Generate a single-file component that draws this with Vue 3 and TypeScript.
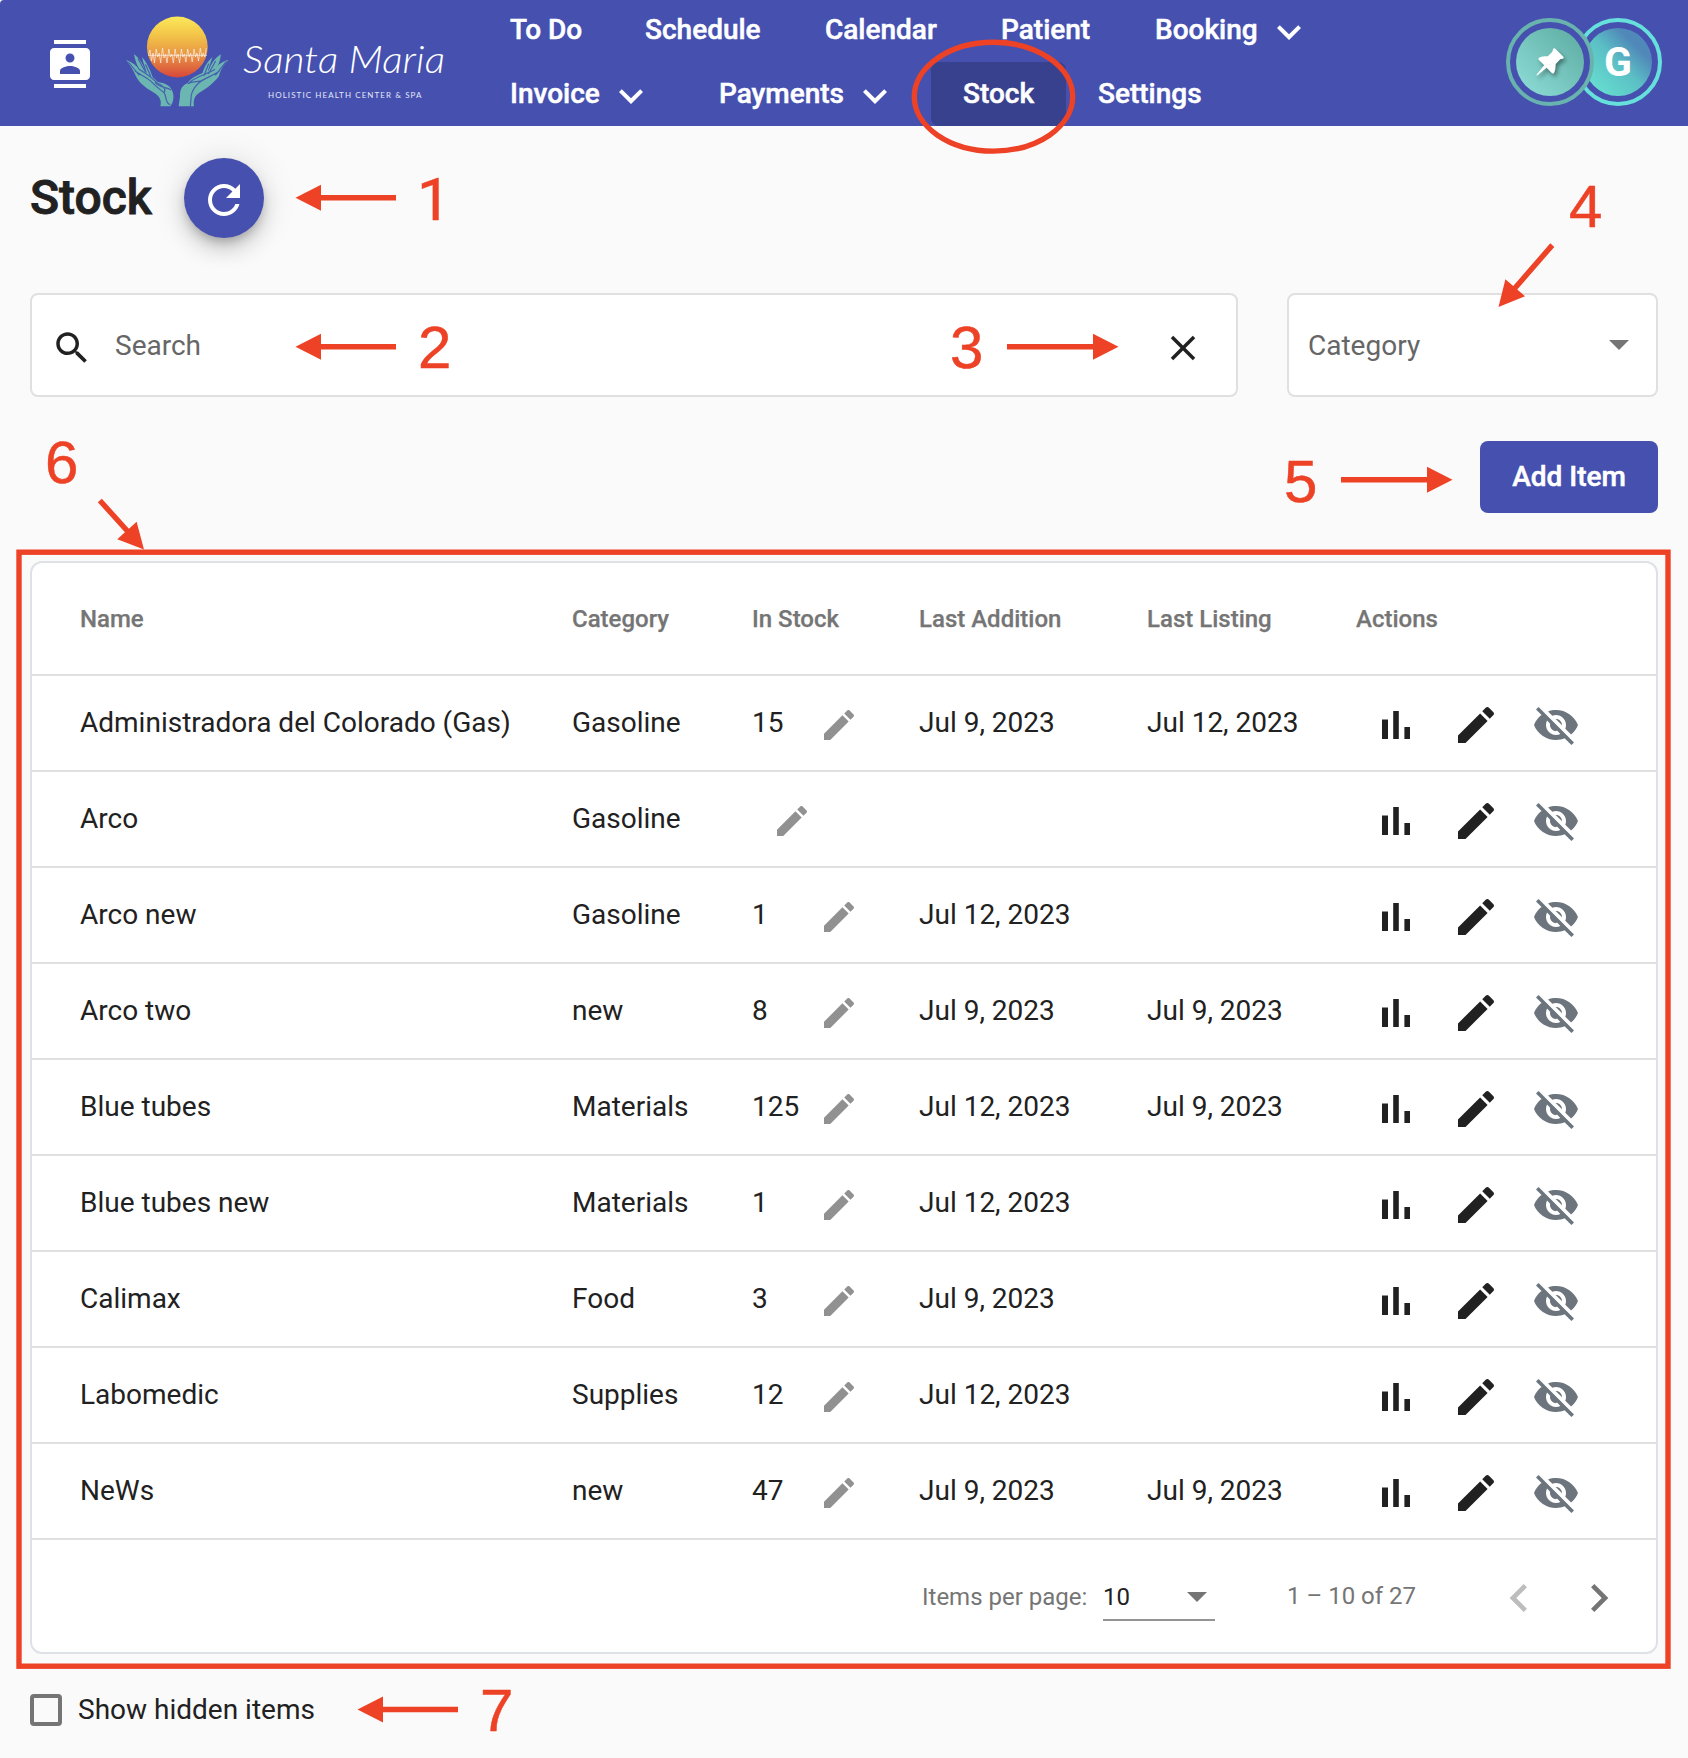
<script setup lang="ts">
interface NavLink {
  label: string
  width: number
  menu?: boolean
  active?: boolean
}
interface StockItem {
  name: string
  category: string
  stock: string
  added: string
  listed: string
}

const navRows: NavLink[][] = [
  [
    { label: 'To Do', width: 135 },
    { label: 'Schedule', width: 180 },
    { label: 'Calendar', width: 176 },
    { label: 'Patient', width: 154 },
    { label: 'Booking', width: 222, menu: true },
  ],
  [
    { label: 'Invoice', width: 209, menu: true },
    { label: 'Payments', width: 244, menu: true },
    { label: 'Stock', width: 135, active: true },
    { label: 'Settings', width: 168 },
  ],
]

const columns: string[] = ['Name', 'Category', 'In Stock', 'Last Addition', 'Last Listing', 'Actions']

const items: StockItem[] = [
  { name: 'Administradora del Colorado (Gas)', category: 'Gasoline', stock: '15', added: 'Jul 9, 2023', listed: 'Jul 12, 2023' },
  { name: 'Arco', category: 'Gasoline', stock: '', added: '', listed: '' },
  { name: 'Arco new', category: 'Gasoline', stock: '1', added: 'Jul 12, 2023', listed: '' },
  { name: 'Arco two', category: 'new', stock: '8', added: 'Jul 9, 2023', listed: 'Jul 9, 2023' },
  { name: 'Blue tubes', category: 'Materials', stock: '125', added: 'Jul 12, 2023', listed: 'Jul 9, 2023' },
  { name: 'Blue tubes new', category: 'Materials', stock: '1', added: 'Jul 12, 2023', listed: '' },
  { name: 'Calimax', category: 'Food', stock: '3', added: 'Jul 9, 2023', listed: '' },
  { name: 'Labomedic', category: 'Supplies', stock: '12', added: 'Jul 12, 2023', listed: '' },
  { name: 'NeWs', category: 'new', stock: '47', added: 'Jul 9, 2023', listed: 'Jul 9, 2023' },
]

const icons = {
  edit: 'M3 17.25V21h3.75L17.81 9.94l-3.75-3.75L3 17.25zM20.71 7.04c.39-.39.39-1.02 0-1.41l-2.34-2.34c-.39-.39-1.02-.39-1.41 0l-1.83 1.83 3.75 3.75 1.83-1.83z',
  chart: 'M5 9.2h3V19H5V9.2zM10.6 5h2.8v14h-2.8V5zm5.6 8H19v6h-2.8v-6z',
  hide: 'M12 7c2.76 0 5 2.24 5 5 0 .65-.13 1.26-.36 1.83l2.92 2.92c1.51-1.26 2.7-2.89 3.43-4.75-1.73-4.39-6-7.5-11-7.5-1.4 0-2.74.25-3.98.7l2.16 2.16C10.74 7.13 11.35 7 12 7zM2 4.27l2.28 2.28.46.46C3.08 8.3 1.78 10.02 1 12c1.73 4.39 6 7.5 11 7.5 1.55 0 3.03-.3 4.38-.84l.42.42L19.73 22 21 20.73 3.27 3 2 4.27zM7.53 9.8l1.55 1.55c-.05.21-.08.43-.08.65 0 1.66 1.34 3 3 3 .22 0 .44-.03.65-.08l1.55 1.55c-.67.33-1.41.53-2.2.53-2.76 0-5-2.24-5-5 0-.79.2-1.53.53-2.2zm4.31-.78l3.15 3.15.02-.16c0-1.66-1.34-3-3-3l-.17.01z',
}
</script>

<template>
  <div class="page">
    <header class="topbar">
      <svg class="contacts" viewBox="0 0 24 24"><path d="M20 0H4v2h16V0zM4 24h16v-2H4v2zM20 4H4c-1.1 0-2 .9-2 2v12c0 1.1.9 2 2 2h16c1.1 0 2-.9 2-2V6c0-1.1-.9-2-2-2zm-8 2.75c1.24 0 2.25 1.01 2.25 2.25s-1.01 2.25-2.25 2.25S9.75 10.24 9.75 9 10.76 6.75 12 6.75zM17 17H7v-1.5c0-1.67 3.33-2.5 5-2.5s5 .83 5 2.5V17z" /></svg>
      <svg class="logo" viewBox="120 0 336 126">
        <defs>
          <linearGradient id="sun" x1="0" y1="0" x2="0" y2="1">
            <stop offset="0" stop-color="#fbe85a" />
            <stop offset=".3" stop-color="#f3c548" />
            <stop offset=".6" stop-color="#e99a45" />
            <stop offset="1" stop-color="#d8473b" />
          </linearGradient>
        </defs>
        <circle cx="177.3" cy="47" r="30.4" fill="url(#sun)" />
        <path d="M148 55.300h59M148.500 55l1.500-5 1.500 11 1.500-8 1.500 10 1.700-14 1.500 8 1.500-4 1.500 10 1.800-15 1.500 10 1.500-4 1.500 9 1.800-14 1.500 8 1.500-3 1.500 9 1.800-14 1.500 9 1.500-4 1.500 9 1.800-14 1.500 8 1.500-3 1.500 8 1.800-13 1.500 8 1.500-4 1.500 9 1.800-13 1.500 8 1.500-4 1.500 8 1.800-13 1.500 9 1.500-4 1.500 4 1.500-9" fill="none" stroke="#fff" stroke-opacity=".72" stroke-width=".8" />
        <g transform="translate(120 5) scale(.33333)" class="hand">
          <path d="M19 165 C38 172 50 182 57 194 C82 201 98 214 112 230 C135 235 150 241 154 253 C164 268 162 291 151 304 L121 304 C126 287 119 273 102 263 C81 251 59 237 48 214 C40 194 29 180 19 165Z" />
          <path d="M42 147 C56 159 69 176 72 189 L81 206 L58 192 C49 178 45 163 42 147Z" />
          <path d="M66 156 C79 172 89 189 98 217 L82 207 C76 187 69 174 66 156Z" />
          <path d="M325 164 C302 172 291 181 286 192 C251 203 219 211 203 234 C181 243 180 259 180 274 L176 304 L222 304 C219 286 224 272 238 263 C260 250 281 235 297 213 C301 193 312 180 325 164Z" />
          <path d="M302 148 C286 159 274 175 269 190 L262 207 L287 193 C298 177 302 163 302 148Z" />
          <path d="M277 157 C262 170 252 186 246 211 L263 204 C266 187 272 174 277 157Z" />
          <g class="crease">
            <path d="M25 171 L58 211 M57 193 C80 207 97 218 110 233 C130 242 140 252 132 263 M45 198 C60 210 81 216 97 233 C110 247 123 256 132 263 C142 277 134 295 151 299 M54 161 L77 202 M76 178 L92 213 M105 232 C121 251 140 245 153 255" />
            <path d="M319 169 L286 211 M285 193 C260 210 225 213 205 236 M298 198 C279 214 251 218 233 237 C218 252 212 268 213 284 L211 304 M287 168 L265 207 M266 176 L252 212 M203 236 C220 226 239 234 249 224" />
          </g>
        </g>
        <text x="243" y="73" class="script" textLength="202" lengthAdjust="spacingAndGlyphs">Santa Maria</text>
        <text x="268" y="97.500" class="tagline" textLength="153.500">HOLISTIC HEALTH CENTER &amp; SPA</text>
      </svg>
      <nav class="nav">
        <div v-for="(row, r) in navRows" :key="r" class="nav-row">
          <a v-for="link in row" :key="link.label" class="nav-link" :class="{ active: link.active }" :style="{ width: link.width + 'px' }">
            <span>{{ link.label }}</span>
            <svg v-if="link.menu" class="caret" viewBox="0 0 24 24"><path d="M16.590 8.590L12 13.170 7.410 8.590 6 10l6 6 6-6z" /></svg>
          </a>
        </div>
      </nav>
      <div class="avatars">
        <div class="avatar pin">
          <div class="disc">
            <svg viewBox="0 0 28 28"><path d="M17.500.500c.8-.7 1.500-.2 2.100.4l7.300 7.300c.7.700 1.300 1.800.3 2.400-.8.600-2 .3-3 .7l-4.500 4.700c-.3 2.500.1 5-1.400 8.500-.6 1.200-1.600 1.400-2.500.5l-5.200-5.200L1.500 27.300.500 27.500.700 26.500 8.200 17.300 3 12.100c-.9-.9-.7-1.900.5-2.500 3-1.500 5.300-1.400 8.300-1.400l4.500-4.400c.6-1.200.3-2.600 1.200-3.300z" /></svg>
          </div>
        </div>
        <div class="avatar user"><div class="disc">G</div></div>
      </div>
    </header>

    <main class="content">
      <div class="heading">
        <h1>Stock</h1>
        <button class="fab"><svg viewBox="0 0 24 24"><path d="M17.650 6.350C16.200 4.900 14.210 4 12 4c-4.420 0-7.990 3.580-7.990 8s3.570 8 7.990 8c3.730 0 6.840-2.550 7.730-6h-2.080c-.82 2.330-3.040 4-5.650 4-3.310 0-6-2.690-6-6s2.690-6 6-6c1.660 0 3.140.69 4.220 1.780L13 11h7V4l-2.350 2.350z" /></svg></button>
      </div>

      <div class="filters">
        <div class="field search">
          <svg viewBox="0 0 24 24"><path d="M15.500 14h-.79l-.28-.27C15.410 12.590 16 11.110 16 9.500 16 5.910 13.090 3 9.500 3S3 5.910 3 9.500 5.910 16 9.500 16c1.610 0 3.090-.59 4.230-1.570l.27.28v.79l5 4.990L20.490 19l-4.990-5zm-6 0C7.010 14 5 11.990 5 9.500S7.010 5 9.500 5 14 7.010 14 9.500 11.990 14 9.500 14z" /></svg>
          <span class="placeholder">Search</span>
          <svg class="clear" viewBox="0 0 24 24"><path d="M19 6.410L17.590 5 12 10.590 6.410 5 5 6.410 10.590 12 5 17.590 6.410 19 12 13.410 17.590 19 19 17.590 13.410 12z" /></svg>
        </div>
        <div class="field category">
          <span class="placeholder">Category</span>
          <i class="arrow"></i>
        </div>
      </div>

      <div class="toolbar"><button class="add">Add Item</button></div>

      <section class="card">
        <div class="row head">
          <span v-for="c in columns" :key="c"><b>{{ c }}</b></span>
        </div>
        <div v-for="item in items" :key="item.name" class="row">
          <span class="txt">{{ item.name }}</span>
          <span class="txt">{{ item.category }}</span>
          <span class="qty">
            <em v-if="item.stock">{{ item.stock }}</em>
            <svg viewBox="0 0 24 24"><path :d="icons.edit" /></svg>
          </span>
          <span class="txt">{{ item.added }}</span>
          <span class="txt">{{ item.listed }}</span>
          <span class="actions">
            <svg viewBox="0 0 24 24"><path :d="icons.chart" /></svg>
            <svg viewBox="0 0 24 24"><path :d="icons.edit" /></svg>
            <svg class="muted" viewBox="0 0 24 24"><path :d="icons.hide" /></svg>
          </span>
        </div>
        <div class="paginator">
          <span class="per-page">Items per page:</span>
          <div class="size"><span>10</span><i class="arrow"></i></div>
          <span class="range">1 – 10 of 27</span>
          <svg class="prev" viewBox="0 0 24 24"><path d="M15.410 7.410L14 6l-6 6 6 6 1.410-1.410L10.830 12z" /></svg>
          <svg class="next" viewBox="0 0 24 24"><path d="M10 6L8.590 7.410 13.170 12l-4.580 4.590L10 18l6-6z" /></svg>
        </div>
      </section>

      <label class="hidden-toggle"><i class="box"></i><span>Show hidden items</span></label>
    </main>

    <!-- Numbered callouts laid over the screen -->
    <svg class="callouts" viewBox="0 0 1688 1758">
      <defs>
        <g id="callout-arrow">
          <path d="M0 0L25.500-13V-2.700H100.500V2.700H25.500V13Z" />
        </g>
      </defs>
      <ellipse class="line" cx="993.500" cy="96.700" rx="79.200" ry="54.400" />
      <rect class="line" x="19" y="552.200" width="1649" height="1114" />
      <use href="#callout-arrow" transform="translate(295.500 197.800)" />
      <use href="#callout-arrow" transform="translate(295.500 346.800)" />
      <use href="#callout-arrow" transform="translate(357.500 1709.500)" />
      <path d="M1118.500 346.800L1093 333.800V344.100H1007V349.500H1093V359.800Z" />
      <path d="M1452.500 479.700L1427 466.700V477H1341V482.400H1427V492.700Z" />
      <path d="M0 0L25.500-13V-2.700H82V2.700H25.500V13Z" transform="translate(1498.500 307) rotate(-49)" />
      <path d="M0 0L25.500-13V-2.700H66V2.700H25.500V13Z" transform="translate(144 549.500) rotate(-132)" />
      <text x="417" y="219.500" class="one">1</text>
      <text x="418" y="368">2</text>
      <text x="950" y="368">3</text>
      <text x="1569" y="227">4</text>
      <text x="1284" y="501.500">5</text>
      <text x="45" y="483">6</text>
      <text x="480" y="1731">7</text>
    </svg>
  </div>
</template>

<style>
html,
body {
  margin: 0;
  background: #fafafa;
}
</style>

<style scoped>
* {
  box-sizing: border-box;
}
.page {
  position: relative;
  width: 1688px;
  height: 1758px;
  overflow: hidden;
  background: #fafafa;
  color: #212121;
  font-family: Roboto, sans-serif;
  font-size: 28px;
}
svg {
  display: block;
  flex: none;
  fill: currentColor;
}
button {
  border: 0;
  font-family: inherit;
}
.topbar {
  display: flex;
  height: 126px;
  background: #4550af;
  color: #fff;
  border-top-left-radius: 4px;
}
.contacts {
  width: 48px;
  height: 48px;
  margin: 40px 0 0 46px;
}
.logo {
  width: 336px;
  height: 126px;
  margin-left: 26px;
}
.hand {
  fill: #6cb6b1;
}
.crease {
  fill: none;
  stroke: #4560ae;
  stroke-width: 3.5;
}
.script {
  font-family: Lato, sans-serif;
  font-style: italic;
  font-weight: 300;
  font-size: 38px;
}
.tagline {
  font-family: Lato, sans-serif;
  font-size: 8px;
  fill: #e4e6f6;
}
.nav {
  width: 880px;
  margin: -2px 0 0 22px;
}
.nav-row {
  display: flex;
  height: 64px;
}
.nav-link {
  display: flex;
  align-items: center;
  height: 64px;
  padding: 0 32px;
  border-radius: 8px;
  font-weight: 500;
  white-space: nowrap;
  -webkit-text-stroke: 0.5px currentColor;
}
.nav-link span {
  flex: 1;
  margin-top: -2px;
}
.nav-link.active {
  background: #38418e;
}
.caret {
  width: 48px;
  height: 48px;
  margin-top: 3px;
}
.avatars {
  display: flex;
  margin: 18px 0 0 148px;
}
.avatar {
  width: 88px;
  height: 88px;
  padding: 6px;
  border: 4px solid #68b3ae;
  border-radius: 50%;
  background: #4550af;
}
.avatar.pin {
  position: relative;
  z-index: 1;
}
.avatar.user {
  margin-left: -20px;
  border-color: #67e0dc;
}
.disc {
  display: flex;
  align-items: center;
  justify-content: center;
  width: 68px;
  height: 68px;
  border-radius: 50%;
  background: linear-gradient(45deg, #8fdfd9, #5caaa1);
}
.disc svg {
  width: 28px;
  height: 28px;
  margin-right: 1px;
  filter: drop-shadow(2px 3px 2px rgba(0, 0, 0, 0.4));
}
.user .disc {
  background: linear-gradient(45deg, #67e0d0 10%, #5bbfc5 50%, #5089b9 75%);
  font-size: 41px;
  font-weight: 700;
}
.content {
  padding: 32px 30px 0;
}
.heading {
  display: flex;
  height: 80px;
}
h1 {
  width: 154px;
  margin: 12px 0 0;
  font-size: 48px;
  line-height: 56px;
  font-weight: 500;
  -webkit-text-stroke: 0.9px currentColor;
}
.fab {
  display: flex;
  align-items: center;
  justify-content: center;
  width: 80px;
  height: 80px;
  padding: 4px 0 0;
  border-radius: 50%;
  background: #4550af;
  color: #fff;
  box-shadow: 0 6px 10px -2px rgba(0, 0, 0, 0.2), 0 12px 20px rgba(0, 0, 0, 0.14), 0 2px 36px rgba(0, 0, 0, 0.12);
}
.fab svg {
  width: 48px;
  height: 48px;
}
.filters {
  display: flex;
  gap: 49px;
  margin-top: 55px;
}
.field {
  display: flex;
  align-items: center;
  height: 104px;
  border: 2px solid #e0e0e0;
  border-radius: 8px;
  background: #fff;
}
.field svg {
  width: 42px;
  height: 42px;
  margin-top: 5px;
}
.search {
  width: 1208px;
  padding: 0 32px 0 19px;
}
.placeholder {
  flex: 1;
  color: #666;
}
.search .placeholder {
  margin-left: 22px;
}
.category {
  width: 371px;
  padding: 0 27px 0 19px;
}
.arrow {
  width: 0;
  border: 10px solid transparent;
  border-top-color: #757575;
  border-bottom: 0;
}
.toolbar {
  display: flex;
  justify-content: flex-end;
  margin-top: 44px;
}
.add {
  width: 178px;
  height: 72px;
  padding: 0 0 1px;
  border-radius: 8px;
  background: #4550af;
  color: #fff;
  font-size: 28px;
  font-weight: 500;
  -webkit-text-stroke: 0.5px currentColor;
}
.card {
  margin-top: 48px;
  border: 2px solid #dee2e6;
  border-radius: 12px;
  background: #fff;
}
.row {
  display: grid;
  grid-template-columns: 492px 180px 167px 228px 209px 1fr;
  align-items: center;
  height: 96px;
  padding-left: 48px;
  border-bottom: 2px solid #e0e0e0;
}
.head {
  height: 113px;
  color: #757575;
  font-size: 24px;
}
.head b {
  font-weight: 500;
  -webkit-text-stroke: 0.25px currentColor;
}
.txt,
.qty em {
  margin-top: -1px;
  font-style: normal;
  white-space: nowrap;
}
.qty {
  display: flex;
  align-items: center;
  gap: 20px;
  color: #919191;
}
.qty em {
  width: 47px;
  color: #212121;
}
.qty svg {
  width: 40px;
  height: 40px;
  margin-top: 4px;
}
.qty svg:first-child {
  margin-left: 20px;
}
.actions {
  display: flex;
  gap: 32px;
  padding: 4px 0 0 16px;
}
.actions svg {
  width: 48px;
  height: 48px;
}
.actions .muted {
  color: #6c757d;
}
.paginator {
  display: flex;
  align-items: center;
  height: 112px;
  padding-left: 890px;
  color: #757575;
  font-size: 24px;
  white-space: nowrap;
}
.per-page {
  width: 181px;
  margin-top: 2px;
}
.size {
  display: flex;
  align-items: center;
  justify-content: space-between;
  width: 112px;
  height: 50px;
  padding: 3px 8px 0 0;
  border-bottom: 2px solid #949494;
  color: #212121;
}
.range {
  width: 204px;
  margin: 0 0 0 72px;
}
.paginator svg {
  width: 56px;
  height: 56px;
  margin-top: 4px;
}
.paginator .prev {
  color: #bdbdbd;
  margin-right: 24px;
}
.hidden-toggle {
  display: flex;
  align-items: center;
  gap: 16px;
  height: 32px;
  margin-top: 40px;
}
.box {
  width: 32px;
  height: 32px;
  border: 4px solid #757575;
  border-radius: 4px;
}
.hidden-toggle span {
  margin-top: -2px;
}
.callouts {
  position: absolute;
  top: 0;
  left: 0;
  z-index: 2;
  width: 1688px;
  height: 1758px;
  fill: #ed4226;
  pointer-events: none;
}
.callouts text {
  font-family: 'Liberation Sans', Arial, sans-serif;
  font-size: 60px;
  stroke: #ed4226;
  stroke-width: 0.5px;
}
.callouts .one {
  font-family: Roboto, sans-serif;
}
.callouts .line {
  fill: none;
  stroke: #ed4226;
  stroke-width: 5.4;
}
</style>
